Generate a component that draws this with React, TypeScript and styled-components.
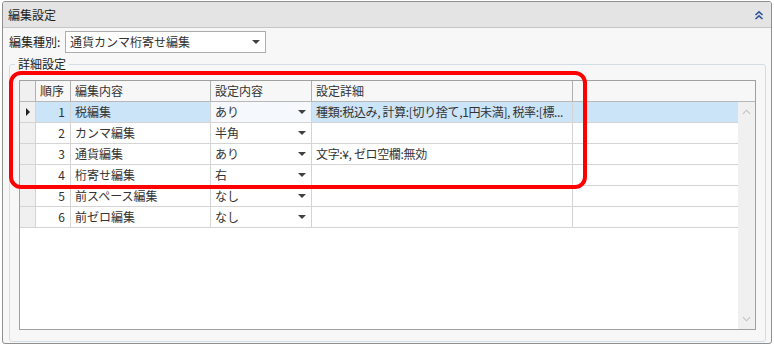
import styled, { createGlobalStyle } from 'styled-components';

const GlobalStyle = createGlobalStyle`
  body {
    margin: 0;
    background: #ffffff;
    font-family: 'Noto Sans CJK JP', 'Noto Sans', sans-serif;
    font-size: 12px;
    color: #333333;
  }
`;

type Row = {
  no: number;
  name: string;
  value: string;
  detail: string;
};

const rows: Row[] = [
  { no: 1, name: '税編集', value: 'あり', detail: '種類:税込み, 計算:[切り捨て,1円未満], 税率:[標...' },
  { no: 2, name: 'カンマ編集', value: '半角', detail: '' },
  { no: 3, name: '通貨編集', value: 'あり', detail: '文字:¥, ゼロ空欄:無効' },
  { no: 4, name: '桁寄せ編集', value: '右', detail: '' },
  { no: 5, name: '前スペース編集', value: 'なし', detail: '' },
  { no: 6, name: '前ゼロ編集', value: 'なし', detail: '' },
];

function App() {
  return (
    <>
      <GlobalStyle />
      <Page>
        <Panel>
          <TitleBar>
            <span>編集設定</span>
            <CollapseIcon viewBox='0 0 10 10'>
              <path d='M1.5 5 L5 1.8 L8.5 5 M1.5 9 L5 5.8 L8.5 9' />
            </CollapseIcon>
          </TitleBar>
          <Body>
            <KindRow>
              <Label>編集種別:</Label>
              <Combo>
                <span>通貨カンマ桁寄せ編集</span>
                <Arrow />
              </Combo>
            </KindRow>
            <GroupBox>
              <Legend>詳細設定</Legend>
              <Grid>
                <HeaderRow>
                  <RowHead $header />
                  <HeadCell $w={35}>順序</HeadCell>
                  <HeadCell $w={140}>編集内容</HeadCell>
                  <HeadCell $w={101}>設定内容</HeadCell>
                  <HeadCell $w={261}>設定詳細</HeadCell>
                  <Filler />
                </HeaderRow>
                <BodyArea>
                  <Rows>
                    {rows.map((r) => {
                      const sel = r.no === 1;
                      return (
                        <DataRow key={r.no} $selected={sel}>
                          <RowHead>{sel && <Pointer />}</RowHead>
                          <Cell $w={35} $align='right'>{r.no}</Cell>
                          <Cell $w={140}>{r.name}</Cell>
                          <ComboCell $w={101} $selected={sel}>
                            <span>{r.value}</span>
                            <Arrow />
                          </ComboCell>
                          <DetailCell $w={261}>{r.detail}</DetailCell>
                          <Filler />
                        </DataRow>
                      );
                    })}
                  </Rows>
                  <ScrollBar>
                    <ScrollArrow viewBox='0 0 10 6'>
                      <path d='M1 5 L5 1 L9 5' />
                    </ScrollArrow>
                    <ScrollArrow viewBox='0 0 10 6'>
                      <path d='M1 1 L5 5 L9 1' />
                    </ScrollArrow>
                  </ScrollBar>
                </BodyArea>
              </Grid>
            </GroupBox>
          </Body>
        </Panel>
        <Highlight />
      </Page>
    </>
  );
}

export default App;

const Page = styled.div`
  position: relative;
  padding: 1px 0 0 2px;
  width: 774px;
  height: 348px;
  box-sizing: border-box;
`;

const Panel = styled.div`
  width: 770px;
  height: 343px;
  box-sizing: border-box;
  border: 1px solid #8f8f8f;
  border-radius: 3px;
  background: #f7f7f7;
  display: flex;
  flex-direction: column;
  overflow: hidden;
`;

const TitleBar = styled.div`
  height: 26px;
  box-sizing: border-box;
  background: #e4e4e4;
  border-bottom: 1px solid #c6c6c6;
  display: flex;
  align-items: center;
  justify-content: space-between;
  padding: 0 7px 0 5px;
  line-height: 14px;
  color: #222222;
`;

const CollapseIcon = styled.svg`
  width: 10px;
  height: 10px;
  fill: none;
  stroke: #2f5596;
  stroke-width: 1.6;
`;

const Body = styled.div`
  flex: 1;
  display: flex;
  flex-direction: column;
  padding: 3px 5px 1px 6px;
`;

const KindRow = styled.div`
  display: flex;
  align-items: center;
  height: 22px;
`;

const Label = styled.span`
  width: 56px;
  line-height: 14px;
  color: #222222;
`;

const Combo = styled.div`
  width: 201px;
  height: 22px;
  box-sizing: border-box;
  border: 1px solid #acacac;
  background: #ffffff;
  display: flex;
  align-items: center;
  justify-content: space-between;
  padding: 0 5px 0 4px;
  line-height: 14px;
`;

const Arrow = styled.i`
  width: 0;
  height: 0;
  border-left: 4px solid transparent;
  border-right: 4px solid transparent;
  border-top: 4px solid #404040;
`;

const GroupBox = styled.div`
  position: relative;
  margin-top: 11px;
  flex: 1;
  border: 1px solid #d3dde6;
  border-radius: 3px;
  padding: 15px 9px 11px 9px;
  display: flex;
`;

const Legend = styled.span`
  position: absolute;
  top: -8px;
  left: 5px;
  padding: 0 3px;
  background: #f7f7f7;
  line-height: 14px;
  color: #222222;
`;

const Grid = styled.div`
  flex: 1;
  border: 1px solid #a0a0a0;
  background: #ffffff;
  display: flex;
  flex-direction: column;
  overflow: hidden;
`;

const HeaderRow = styled.div`
  display: flex;
  height: 21px;
  box-sizing: border-box;
  background: #f7f7f7;
  border-bottom: 1px solid #b8b8b8;
`;

const RowHead = styled.div<{ $header?: boolean }>`
  width: 16px;
  flex: none;
  box-sizing: border-box;
  background: #f0f0f0;
  border-right: 1px solid ${(p) => (p.$header ? '#b0b0b0' : '#d4d4d4')};
  display: flex;
  align-items: center;
  justify-content: center;
`;

const Pointer = styled.i`
  width: 0;
  height: 0;
  border-top: 4px solid transparent;
  border-bottom: 4px solid transparent;
  border-left: 4px solid #202020;
  margin-left: 1px;
`;

const HeadCell = styled.div<{ $w: number }>`
  width: ${(p) => p.$w}px;
  flex: none;
  box-sizing: border-box;
  border-right: 1px solid #b0b0b0;
  padding: 0 4px;
  display: flex;
  align-items: center;
  line-height: 14px;
`;

const Filler = styled.div`
  flex: 1;
`;

const BodyArea = styled.div`
  flex: 1;
  display: flex;
`;

const Rows = styled.div`
  flex: 1;
  display: flex;
  flex-direction: column;
`;

const DataRow = styled.div<{ $selected?: boolean }>`
  display: flex;
  height: 21px;
  box-sizing: border-box;
  border-bottom: 1px solid #d4d4d4;
  background: ${(p) => (p.$selected ? '#cce4f7' : '#ffffff')};
`;

const Cell = styled.div<{ $w: number; $align?: 'right' }>`
  width: ${(p) => p.$w}px;
  flex: none;
  box-sizing: border-box;
  border-right: 1px solid #d4d4d4;
  padding: 0 5px 0 4px;
  display: flex;
  align-items: center;
  justify-content: ${(p) => (p.$align === 'right' ? 'flex-end' : 'flex-start')};
  white-space: nowrap;
  overflow: hidden;
  line-height: 14px;
`;

const ComboCell = styled(Cell)<{ $selected?: boolean }>`
  justify-content: space-between;
  padding-right: 5px;
  background: ${(p) => (p.$selected ? '#f5f9fd' : '#ffffff')};
`;

const DetailCell = styled(Cell)`
  letter-spacing: -0.35px;
`;

const ScrollBar = styled.div`
  width: 17px;
  flex: none;
  background: #f0f0f0;
  display: flex;
  flex-direction: column;
  justify-content: space-between;
  align-items: center;
  padding: 7px 0 7px;
`;

const ScrollArrow = styled.svg`
  width: 9px;
  height: 6px;
  fill: none;
  stroke: #c2c2c2;
  stroke-width: 1.2;
`;

const Highlight = styled.div`
  position: absolute;
  left: 9px;
  top: 71px;
  width: 578px;
  height: 118px;
  box-sizing: border-box;
  border: 4px solid #ff0000;
  border-radius: 12px;
  pointer-events: none;
`;
